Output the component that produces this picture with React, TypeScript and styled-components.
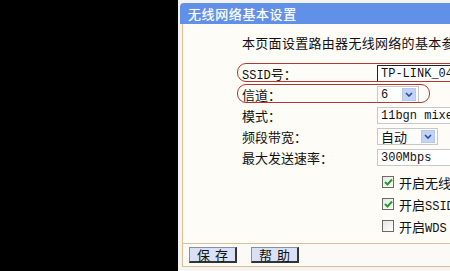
import React from "react";
import styled, { createGlobalStyle } from "styled-components";

const Global = createGlobalStyle`
  html, body { margin: 0; padding: 0; background: #000; }
  body { width: 450px; height: 271px; overflow: hidden; }
  #root { width: 450px; height: 271px; }
`;

const CJK = `"Noto Sans CJK SC", "Noto Sans", sans-serif`;
const MONO = `"Liberation Mono", "Noto Sans CJK SC", monospace`;

const Page = styled.div`
  display: flex;
  width: 450px;
  height: 271px;
  background: #000;
  overflow: hidden;
`;

const Spacer = styled.div`
  width: 178px;
  flex: none;
`;

const Panel = styled.div`
  width: 272px;
  flex: none;
  background: #f3f3f1;
  display: flex;
  flex-direction: column;
  padding-top: 3px;
  box-sizing: border-box;
`;

const TitleBar = styled.div`
  margin-left: 2px;
  height: 21px;
  background: #6090e8;
  border-top-left-radius: 4px;
  display: flex;
  align-items: center;
  padding-left: 8px;
  font-family: ${CJK};
  font-size: 13px;
  letter-spacing: 0.6px;
  color: #fff;
  text-shadow: 0 0 1px rgba(255, 255, 255, 0.6);
`;

const Content = styled.div`
  margin-left: 4px;
  height: 220px;
  box-sizing: border-box;
  background: #fdfcf7;
  border-left: 1px solid #dcbf95;
  border-bottom: 1px solid #dcbf95;
  padding: 9px 0 0 59px;
  display: flex;
  flex-direction: column;
`;

const Desc = styled.div`
  height: 20px;
  line-height: 20px;
  font-family: ${CJK};
  font-size: 13px;
  letter-spacing: 0.3px;
  color: #111;
  white-space: nowrap;
  margin-bottom: 10px;
`;

const Row = styled.div<{ $h?: number }>`
  position: relative;
  height: ${(p) => p.$h ?? 21}px;
  display: flex;
  align-items: center;
  white-space: nowrap;
`;

const Label = styled.div`
  width: 135px;
  flex: none;
  font-family: ${CJK};
  font-size: 13px;
  color: #111;
`;

const LatinLabel = styled.span`
  font-family: ${MONO};
  font-size: 12px;
`;

const Oval = styled.div<{ $w: number }>`
  position: absolute;
  left: -5px;
  top: 0px;
  height: 19px;
  width: ${(p) => p.$w}px;
  border: 1px solid #b8352f;
  border-radius: 9px;
  box-sizing: border-box;
  pointer-events: none;
`;

const TextBox = styled.div<{ $dark?: boolean }>`
  height: 17px;
  width: 120px;
  flex: none;
  box-sizing: border-box;
  background: #fff;
  border: 1px solid ${(p) => (p.$dark ? "#555" : "#c8c8c8")};
  ${(p) => (p.$dark ? "border-top-color:#222;border-left-color:#222;" : "")}
  padding-left: 3px;
  display: flex;
  align-items: center;
  font-family: ${MONO};
  font-size: 12px;
  color: #111;
  overflow: hidden;
`;

const Select = styled.div<{ $w: number }>`
  height: 17px;
  width: ${(p) => p.$w}px;
  flex: none;
  box-sizing: border-box;
  background: #fff;
  border: 1px solid #c8c8c8;
  display: flex;
  align-items: center;
  justify-content: space-between;
  padding: 0 2px 0 3px;
  font-family: ${MONO};
  font-size: 12px;
  color: #111;
`;

const SelectText = styled.span<{ $cjk?: boolean }>`
  font-family: ${(p) => (p.$cjk ? CJK : MONO)};
  font-size: ${(p) => (p.$cjk ? 13 : 12)}px;
`;

const ArrowBtn = styled.div`
  width: 14px;
  height: 13px;
  background: #c3d3f7;
  border: 1px solid #b6c8ee;
  box-sizing: border-box;
  display: flex;
  align-items: center;
  justify-content: center;
`;

const Chevron = () => (
  <svg width="8" height="5" viewBox="0 0 8 5">
    <path d="M1 1 L4 4 L7 1" stroke="#2a4d9a" strokeWidth="1.6" fill="none" />
  </svg>
);

const CheckRow = styled(Row)`
  padding-left: 5px;
`;

const Box = styled.div`
  width: 12px;
  height: 12px;
  flex: none;
  box-sizing: border-box;
  border: 1px solid #6a6a6a;
  background: linear-gradient(135deg, #e6e6e0, #ffffff);
  display: flex;
  align-items: center;
  justify-content: center;
  margin-right: 5px;
`;

const CheckText = styled.span`
  font-family: ${CJK};
  font-size: 13px;
  color: #111;
`;

const Tick = () => (
  <svg width="9" height="8" viewBox="0 0 9 8">
    <path d="M1 4 L3.5 6.5 L8 1.5" stroke="#22a025" strokeWidth="2" fill="none" />
  </svg>
);

const ButtonBar = styled.div`
  margin-left: 4px;
  height: 23px;
  box-sizing: border-box;
  background: #fbfaf6;
  border-left: 1px solid #dcbf95;
  border-bottom: 1px solid #dcbf95;
  display: flex;
  align-items: center;
  gap: 14px;
  padding-left: 6px;
`;

const Button = styled.div`
  width: 48px;
  height: 16px;
  box-sizing: border-box;
  background: #d9e1f6;
  border-top: 1px solid #8a8fa0;
  border-left: 1px solid #8a8fa0;
  border-right: 2px solid #333;
  border-bottom: 2px solid #333;
  display: flex;
  align-items: center;
  justify-content: center;
  font-family: ${CJK};
  font-size: 13px;
  letter-spacing: 5px;
  text-indent: 5px;
  color: #111;
`;

export default function App() {
  return (
    <>
      <Global />
      <Page>
        <Spacer />
        <Panel>
          <TitleBar>无线网络基本设置</TitleBar>
          <Content>
            <Desc>本页面设置路由器无线网络的基本参数和安全认证选项。</Desc>
            <Row>
              <Oval $w={240} />
              <Label>
                <LatinLabel>SSID</LatinLabel>号：
              </Label>
              <TextBox $dark>TP-LINK_041A2C</TextBox>
            </Row>
            <Row>
              <Oval $w={193} />
              <Label>信道：</Label>
              <Select $w={42}>
                <SelectText>6</SelectText>
                <ArrowBtn>
                  <Chevron />
                </ArrowBtn>
              </Select>
            </Row>
            <Row>
              <Label>模式：</Label>
              <TextBox>11bgn mixed</TextBox>
            </Row>
            <Row>
              <Label>频段带宽：</Label>
              <Select $w={61}>
                <SelectText $cjk>自动</SelectText>
                <ArrowBtn>
                  <Chevron />
                </ArrowBtn>
              </Select>
            </Row>
            <Row>
              <Label>最大发送速率：</Label>
              <TextBox>300Mbps</TextBox>
            </Row>
            <CheckRow $h={22} style={{ marginTop: 3, paddingLeft: 140 }}>
              <Box>
                <Tick />
              </Box>
              <CheckText>开启无线功能</CheckText>
            </CheckRow>
            <CheckRow $h={22} style={{ paddingLeft: 140 }}>
              <Box>
                <Tick />
              </Box>
              <CheckText>
                开启<LatinLabel>SSID</LatinLabel>广播
              </CheckText>
            </CheckRow>
            <CheckRow $h={22} style={{ paddingLeft: 140 }}>
              <Box />
              <CheckText>
                开启<LatinLabel>WDS</LatinLabel>
              </CheckText>
            </CheckRow>
          </Content>
          <ButtonBar>
            <Button>保存</Button>
            <Button>帮助</Button>
          </ButtonBar>
        </Panel>
      </Page>
    </>
  );
}
